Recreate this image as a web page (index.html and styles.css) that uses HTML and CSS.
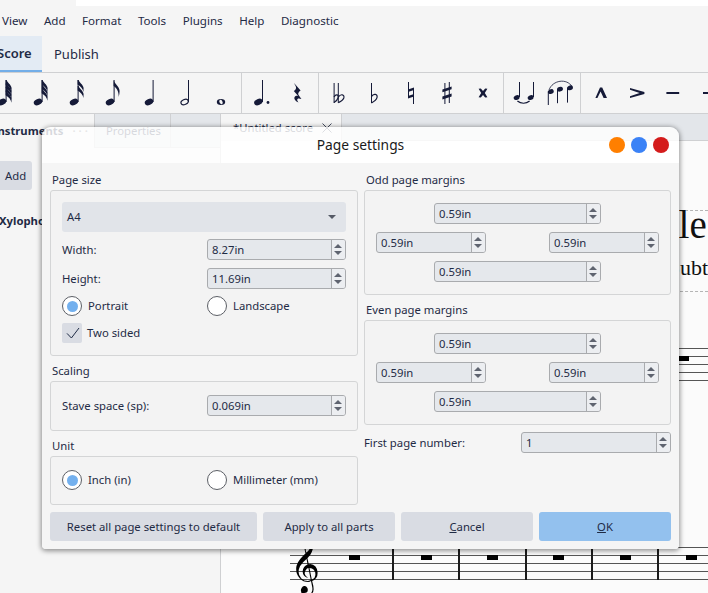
FILE: index.html
```html
<!DOCTYPE html>
<html lang="en">
<head>
<meta charset="utf-8">
<title>Page settings</title>
<link rel="stylesheet" href="styles.css">
</head>
<body>
<svg class="defs" aria-hidden="true">
  <defs>
    <ellipse id="head" cx="15" cy="29" rx="4.4" ry="3" transform="rotate(-22 15 29)"/>
    <path id="flag" d="M18.6 7 C19.6 11 24.4 13 24.6 18 C24.7 20 24.2 22 23.6 24 C24 20 22.6 15.6 18.6 13 Z"/>
    <path id="flagsm" d="M18.6 7 L19.6 7 C20.2 9.5 24.2 11.5 24.6 15 L24.4 19 C24 15.6 21.6 13 18.6 11.4 Z"/>
  </defs>
</svg>
<div class="app">
  <div class="topstrip"><div class="topstrip-left"></div></div>
  <nav class="menubar">
    <span>View</span><span>Add</span><span>Format</span><span>Tools</span><span>Plugins</span><span>Help</span><span>Diagnostic</span>
  </nav>
  <div class="modebar">
    <div class="mode mode-active"><span class="mode-clip">Score</span></div>
    <div class="mode">Publish</div>
  </div>
  <div class="toolbar">
    <button class="tool"><svg viewBox="0 0 36 40"><use href="#head"/><rect x="18.6" y="7" width="1" height="22"/><use href="#flagsm"/><use href="#flagsm" y="3.6"/><use href="#flagsm" y="7.2"/><use href="#flagsm" y="10.8"/></svg></button>
    <button class="tool"><svg viewBox="0 0 36 40"><use href="#head"/><rect x="18.6" y="7" width="1" height="22"/><use href="#flagsm"/><use href="#flagsm" y="4.4"/><use href="#flagsm" y="8.8"/></svg></button>
    <button class="tool"><svg viewBox="0 0 36 40"><use href="#head"/><rect x="18.6" y="7" width="1" height="22"/><use href="#flagsm"/><use href="#flagsm" y="6"/></svg></button>
    <button class="tool"><svg viewBox="0 0 36 40"><use href="#head"/><rect x="18.6" y="7" width="1" height="22"/><use href="#flag"/></svg></button>
    <button class="tool"><svg viewBox="0 0 36 40"><ellipse cx="18" cy="29" rx="4.4" ry="3" transform="rotate(-22 18 29)"/><rect x="21.6" y="7" width="1" height="22"/></svg></button>
    <button class="tool"><svg viewBox="0 0 36 40"><ellipse class="hollow" cx="17.6" cy="29" rx="3.8" ry="2.5" transform="rotate(-24 17.6 29)"/><rect x="21" y="7" width="1" height="22"/></svg></button>
    <button class="tool"><svg viewBox="0 0 36 40"><ellipse cx="18" cy="29" rx="4.2" ry="3"/><ellipse class="hole" cx="18" cy="29" rx="1.5" ry="2.3" transform="rotate(-30 18 29)"/></svg></button>
    <i class="divider"></i>
    <button class="tool"><svg viewBox="0 0 36 40"><ellipse cx="14.4" cy="29" rx="4.4" ry="3" transform="rotate(-22 14.4 29)"/><rect x="18" y="7" width="1" height="22"/><circle cx="24" cy="29.5" r="1.4"/></svg></button>
    <button class="tool"><svg viewBox="0 0 36 40"><path d="M14 10 L20.6 17.6 C18.6 19 17.8 20.6 18.4 21.8 L21.4 26 C18.8 25 17 25.4 17.2 27 C17.3 28 18 28.8 18.6 29.6 C15.6 28.4 13.6 26 14.6 24 C15.4 22.6 17.2 22.4 18.4 23.2 L13.8 18 C15.4 16.8 16.4 15.6 16 14.2 C15.8 13 14.8 11.6 14 10 Z"/></svg></button>
    <i class="divider"></i>
    <button class="tool"><svg viewBox="0 0 36 40"><rect x="12.6" y="10" width="1" height="20"/><rect x="16.8" y="10" width="1" height="20"/><path class="line" d="M13 24 C15 20.6 18 21.6 17 25 C16.4 27 14.6 28.6 13 29.6 M17.4 24 C19.6 20.6 23.8 21.2 22.8 25 C22.2 27 19.6 28.6 17.4 29.6" fill="none"/></svg></button>
    <button class="tool"><svg viewBox="0 0 36 40"><rect x="14" y="10" width="1" height="20"/><path class="line" d="M14.4 23.6 C16.6 20 21 21 20 24.6 C19.4 26.8 16.6 28.8 14.4 30" fill="none"/></svg></button>
    <button class="tool"><svg viewBox="0 0 36 40"><rect x="15" y="9" width="1" height="15.6"/><rect x="20" y="15" width="1" height="16"/><path d="M15 16.6 L21 14.6 L21 17 L15 19 Z M15 23 L21 21 L21 23.4 L15 25.4 Z"/></svg></button>
    <button class="tool"><svg viewBox="0 0 36 40"><rect x="15.4" y="10" width="1" height="21"/><rect x="19.8" y="9" width="1" height="21"/><path d="M13.4 16.4 L22.6 13.4 L22.6 16.2 L13.4 19.2 Z M13.4 23.6 L22.6 20.6 L22.6 23.4 L13.4 26.4 Z"/></svg></button>
    <button class="tool"><svg viewBox="0 0 36 40"><path d="M13.6 15.8 L15.8 15.4 L18 18 L20.2 15.4 L22.4 15.8 L19.8 20 L22.4 24.2 L20.2 24.6 L18 22 L15.8 24.6 L13.6 24.2 L16.2 20 Z"/></svg></button>
    <i class="divider"></i>
    <button class="tool"><svg viewBox="0 0 36 40"><ellipse cx="10.6" cy="24.6" rx="3" ry="2.3" transform="rotate(-22 10.6 24.6)"/><rect x="13" y="9" width="1" height="15"/><ellipse cx="24.6" cy="24.6" rx="3" ry="2.3" transform="rotate(-22 24.6 24.6)"/><rect x="27" y="9" width="1" height="15"/><path class="line" d="M11.4 28 C15 31 20 31 23.6 28" fill="none"/></svg></button>
    <button class="tool"><svg viewBox="0 0 36 40"><ellipse cx="8.8" cy="18.6" rx="3" ry="2.3" transform="rotate(-22 8.8 18.6)"/><rect x="5.8" y="18.6" width="1" height="13.4"/><ellipse cx="18" cy="16.2" rx="3" ry="2.3" transform="rotate(-22 18 16.2)"/><rect x="15" y="16.2" width="1" height="14"/><ellipse cx="28" cy="14.8" rx="3" ry="2.3" transform="rotate(-22 28 14.8)"/><rect x="25" y="14.8" width="1" height="14.8"/><path class="line thin" d="M7 17 C10.5 7 25 5 30 13.6" fill="none"/></svg></button>
    <i class="divider"></i>
    <button class="tool"><svg viewBox="0 0 36 40"><path d="M17 14.6 L19.2 14.6 L24 25 L20.6 25 L17.6 18.6 L14.4 25 L12.4 25 Z"/></svg></button>
    <button class="tool"><svg viewBox="0 0 36 40"><path d="M11 15 L25.4 19 L25.4 21 L11 25 L11 23.2 L20.6 20 L11 16.8 Z"/></svg></button>
    <button class="tool"><svg viewBox="0 0 36 40"><rect x="11.4" y="19" width="12.8" height="2"/></svg></button>
    <button class="tool"><svg viewBox="0 0 36 40"><rect x="12" y="19" width="12.8" height="2"/></svg></button>
  </div>
  <div class="workspace">
    <aside class="panel">
      <div class="panel-tabs">
        <div class="panel-tab panel-tab-active"><b class="panel-clip">Instruments</b><span class="dots">···</span></div>
        <div class="panel-tab panel-tab-props">Properties</div>
        <div class="panel-tab panel-tab-blank"></div>
      </div>
      <div class="add-btn">Add</div>
      <b class="instrument">Xylophone</b>
    </aside>
    <main class="main">
      <div class="doc-tabs">
        <div class="doc-tab"><span>*Untitled score</span>
          <svg class="doc-close" viewBox="0 0 10 10"><path d="M0.5 0.5 L9.5 9.5 M9.5 0.5 L0.5 9.5"/></svg>
        </div>
      </div>
      <div class="canvas">
        <div class="frame frame-top"></div>
        <div class="score-title">Title</div>
        <div class="score-sub">Subtitle</div>
        <div class="frame frame-bottom"></div>
        <div class="staff staff-upper">
          <div class="measure measure-upper"></div>
          <div class="measure"><i class="rest"></i></div><div class="measure"><i class="rest"></i></div><div class="measure"><i class="rest"></i></div><div class="measure"><i class="rest"></i></div><div class="measure"><i class="rest"></i></div>
        </div>
        <div class="staff staff-lower">
          <span class="clef">𝄞</span>
          <div class="measure measure-first"><i class="rest"></i></div>
          <div class="measure"><i class="rest"></i></div><div class="measure"><i class="rest"></i></div><div class="measure"><i class="rest"></i></div><div class="measure"><i class="rest"></i></div><div class="measure"><i class="rest"></i></div>
        </div>
      </div>
    </main>
  </div>
</div>

<section class="dialog">
  <header class="dialog-title">
    <span></span>
    <h1>Page settings</h1>
    <div class="win-btns"><i class="dot dot-orange"></i><i class="dot dot-blue"></i><i class="dot dot-red"></i></div>
  </header>
  <div class="dialog-body">
    <div class="columns">
      <div class="col">
        <div class="section">
          <div class="sec-label">Page size</div>
          <div class="box box-page">
            <div class="combo"><span>A4</span><i class="combo-arrow"></i></div>
            <div class="row row-first"><span>Width:</span><div class="spin"><span class="spin-val">8.27in</span><i class="spin-arrows"></i></div></div>
            <div class="row row-second"><span>Height:</span><div class="spin"><span class="spin-val">11.69in</span><i class="spin-arrows"></i></div></div>
            <div class="row row-radio">
              <label class="radio"><i class="radio-mark radio-on"></i>Portrait</label>
              <label class="radio"><i class="radio-mark"></i>Landscape</label>
            </div>
            <label class="check"><i class="check-mark"><svg viewBox="0 0 20 20"><path d="M5 10.4 L9.4 15 L17 5"/></svg></i>Two sided</label>
          </div>
        </div>
        <div class="section">
          <div class="sec-label">Scaling</div>
          <div class="box box-scale">
            <div class="row"><span>Stave space (sp):</span><div class="spin"><span class="spin-val">0.069in</span><i class="spin-arrows"></i></div></div>
          </div>
        </div>
        <div class="section">
          <div class="sec-label">Unit</div>
          <div class="box box-unit">
            <div class="row row-radio">
              <label class="radio"><i class="radio-mark radio-on"></i>Inch (in)</label>
              <label class="radio"><i class="radio-mark"></i>Millimeter (mm)</label>
            </div>
          </div>
        </div>
      </div>
      <div class="col">
        <div class="section">
          <div class="sec-label">Odd page margins</div>
          <div class="box box-margins">
            <div class="spin spin-wide"><span class="spin-val">0.59in</span><i class="spin-arrows"></i></div>
            <div class="margin-mid">
              <div class="spin spin-small"><span class="spin-val">0.59in</span><i class="spin-arrows"></i></div>
              <div class="spin spin-small"><span class="spin-val">0.59in</span><i class="spin-arrows"></i></div>
            </div>
            <div class="spin spin-wide"><span class="spin-val">0.59in</span><i class="spin-arrows"></i></div>
          </div>
        </div>
        <div class="section">
          <div class="sec-label">Even page margins</div>
          <div class="box box-margins">
            <div class="spin spin-wide"><span class="spin-val">0.59in</span><i class="spin-arrows"></i></div>
            <div class="margin-mid">
              <div class="spin spin-small"><span class="spin-val">0.59in</span><i class="spin-arrows"></i></div>
              <div class="spin spin-small"><span class="spin-val">0.59in</span><i class="spin-arrows"></i></div>
            </div>
            <div class="spin spin-wide"><span class="spin-val">0.59in</span><i class="spin-arrows"></i></div>
          </div>
        </div>
        <div class="first-page"><span>First page number:</span><div class="spin spin-first"><span class="spin-val">1</span><i class="spin-arrows"></i></div></div>
      </div>
    </div>
    <footer class="actions">
      <button class="btn btn-reset">Reset all page settings to default</button>
      <button class="btn">Apply to all parts</button>
      <button class="btn"><u>C</u>ancel</button>
      <button class="btn btn-ok"><u>O</u>K</button>
    </footer>
  </div>
</section>
</body>
</html>
```
FILE: styles.css
```css
* { box-sizing: border-box; }
html, body { margin: 0; padding: 0; }
body {
  width: 708px;
  height: 593px;
  overflow: hidden;
  position: relative;
  font: 11.3px/16px "Noto Sans", sans-serif;
  color: #1f2b45;
  background: #f5f5f5;
}
.defs { position: absolute; width: 0; height: 0; }
.app { display: flex; flex-direction: column; height: 593px; overflow: hidden; }

.topstrip { height: 6px; background: #fff; flex: none; }
.topstrip-left { width: 76px; height: 6px; background: #f5f5f5; }

.menubar { height: 30px; flex: none; display: flex; align-items: center; padding: 0 0 1px 2px; gap: 16.5px; background: #f5f5f5; font-size: 11.6px; }

.modebar { height: 36px; flex: none; display: flex; background: #f5f5f5; font-size: 13px; }
.mode { padding: 0 12px 1px; display: flex; align-items: center; height: 36px; }
.mode-active { width: 42px; padding: 0; background: #e3ebf4; border-bottom: 2px solid #73aee8; font-weight: 600; overflow: hidden; }
.mode-clip { margin-left: -3px; }

.toolbar { height: 42px; flex: none; display: flex; align-items: stretch; border-top: 1px solid #cfd0d2; border-bottom: 1px solid #cfd0d2; background: #f5f5f5; overflow: hidden; }
.tool { width: 36px; flex: none; height: 40px; padding: 0; border: 0; background: none; }
.tool:first-child { margin-left: -13px; }
.tool svg { display: block; width: 36px; height: 40px; fill: #151a38; }
.tool .hollow { fill: none; stroke: #151a38; stroke-width: 1.2; }
.tool .hole { fill: #f5f5f5; }
.tool .line { fill: none; stroke: #151a38; stroke-width: 1.2; }
.tool .thin { stroke-width: .8; }
.divider { width: 1px; flex: none; margin: 0 2px; background: #cfd0d2; }

.workspace { flex: 1; display: flex; min-height: 0; }
.panel { width: 221px; flex: none; background: #f5f5f5; border-right: 1px solid #cfd0d2; overflow: hidden; }
.panel-tabs { display: flex; height: 34px; }
.panel-tab { display: flex; align-items: center; height: 34px; flex: none; }
.panel-tab-active { width: 94px; gap: 9px; }
.panel-clip { margin-left: -7px; flex: none; }
.dots { letter-spacing: 3px; font-weight: 700; flex: none; color: #777; }
.panel-tab-props { width: 77px; padding-left: 11px; background: #e3e6ea; border-left: 1px solid #cfd0d2; border-right: 1px solid #cfd0d2; border-bottom: 1px solid #cfd0d2; }
.panel-tab-blank { width: 49px; background: #e3e6ea; border-bottom: 1px solid #cfd0d2; }
.add-btn { margin-top: 13px; height: 29px; width: 210px; margin-left: -178px; padding-left: 183px; line-height: 29px; background: #d9dce3; border-radius: 3px; }
.instrument { display: block; margin: 23px 0 0 -1px; white-space: nowrap; }

.main { flex: 1; display: flex; flex-direction: column; min-width: 0; }
.doc-tabs { height: 27px; flex: none; background: #e3e6ea; border-bottom: 1px solid #cfd0d2; display: flex; }
.doc-tab { width: 121px; height: 27px; padding-left: 12px; background: #f5f5f5; border-right: 1px solid #cfd0d2; display: flex; align-items: center; gap: 9px; }
.doc-close { width: 10px; height: 10px; flex: none; }
.doc-close path { stroke: #444c60; stroke-width: 1; fill: none; }

.canvas { flex: 1; position: relative; background: #fbfbfb; overflow: hidden; }
.frame { position: absolute; left: 60px; right: 0; height: 0; border-top: 1px dashed #b5b5b5; }
.frame-top { top: 69px; }
.frame-bottom { top: 150px; }
.score-title { position: absolute; left: 413.5px; top: 62px; font: 39px/44px "Liberation Serif", serif; color: #111; white-space: nowrap; }
.score-sub { position: absolute; left: 446.8px; top: 114px; font: 22px/26px "Liberation Serif", serif; color: #111; white-space: nowrap; }

.staff { position: absolute; height: 33px; display: flex; background: repeating-linear-gradient(to bottom, #555 0 1px, transparent 1px 8px); }
.staff-upper { left: 69px; top: 207px; width: 600px; }
.staff-lower { left: 69px; top: 406px; width: 600px; }
.measure { width: 66.33px; flex: none; border-right: 2px solid #1c1c1c; display: flex; justify-content: center; padding-top: 8px; }
.measure-upper { width: 295px; padding: 0; }
.measure-first { width: 104px; justify-content: flex-start; padding-left: 59px; }
.rest { display: block; width: 11px; height: 5px; background: #000; }
.clef { position: absolute; left: 0; top: -9px; font: 51px/52px "DejaVu Sans", sans-serif; color: #000; }

.dialog { position: absolute; left: 42px; top: 127px; width: 637px; height: 422px; border-radius: 9px 9px 4px 4px; box-shadow: 0 1px 5px 1px rgba(0,0,0,.42); display: flex; flex-direction: column; overflow: hidden; }
.dialog-title { height: 36px; flex: none; display: grid; grid-template-columns: 1fr auto 1fr; align-items: center; background: rgba(255,255,255,.82); padding: 0 10px; }
.dialog-title h1 { margin: 0; font-size: 13.8px; font-weight: 400; color: #1a1a1a; }
.win-btns { display: flex; gap: 6px; justify-content: flex-end; }
.dot { width: 16px; height: 16px; border-radius: 50%; display: block; }
.dot-orange { background: #ff7f00; }
.dot-blue { background: #3b82f6; }
.dot-red { background: #d41c1c; }

.dialog-body { flex: 1; background: #f5f5f5; padding: 9px 8px 8px; display: flex; flex-direction: column; }
.columns { display: grid; grid-template-columns: 308px 307px; column-gap: 6px; align-items: start; }
.col { display: flex; flex-direction: column; gap: 7px; }
.sec-label { height: 17px; margin-bottom: 1px; padding-left: 2px; line-height: 15px; }
.box { border: 1px solid #d4d5d6; border-radius: 3px; background: #f3f3f3; padding-left: 11px; padding-right: 11px; }
.box-page { height: 166px; padding-top: 11px; display: flex; flex-direction: column; }
.box-scale { height: 50px; padding-top: 13px; }
.box-unit { height: 49px; padding-top: 13px; }
.box-margins { height: 105px; padding-top: 12px; display: flex; flex-direction: column; align-items: center; gap: 8px; }
.margin-mid { align-self: stretch; display: flex; justify-content: space-between; }

.combo { height: 30px; flex: none; background: #e1e4e9; border-radius: 3px; display: flex; align-items: center; justify-content: space-between; padding: 0 10px 0 5px; }
.combo-arrow { width: 0; height: 0; border-left: 4px solid transparent; border-right: 4px solid transparent; border-top: 4px solid #555a66; }
.row { display: grid; grid-template-columns: 145px 139px; align-items: center; }
.row-first { margin-top: 7px; }
.row-second { margin-top: 8px; }
.row-radio { margin-top: 7px; }
.box-unit .row-radio { margin-top: 0; }

.spin { height: 21px; border: 1px solid #a9abae; border-radius: 3px; background: #e5e8ec; display: flex; overflow: hidden; }
.spin-val { flex: 1; padding-left: 4px; line-height: 20px; }
.spin-arrows { width: 14px; flex: none; position: relative; background: #eceef1; border-left: 1px solid #a9abae; }
.spin-arrows::before, .spin-arrows::after { content: ""; position: absolute; left: 2px; border-left: 4px solid transparent; border-right: 4px solid transparent; }
.spin-arrows::before { top: 4px; border-bottom: 4px solid #5f6470; }
.spin-arrows::after { bottom: 4px; border-top: 4px solid #5f6470; }
.spin-wide { width: 167px; }
.spin-small { width: 110px; }
.spin-first { width: 150px; }
.first-page { display: flex; justify-content: space-between; align-items: center; }

.radio { display: flex; align-items: center; gap: 6px; height: 20px; }
.radio-mark { width: 20px; height: 20px; border-radius: 50%; border: 1px solid #5c5f66; background: #fff; display: flex; align-items: center; justify-content: center; flex: none; }
.radio-on::before { content: ""; width: 11px; height: 11px; border-radius: 50%; background: #73b0ee; }
.check { display: flex; align-items: center; gap: 5px; height: 20px; margin-top: 7px; }
.check-mark { width: 20px; height: 20px; background: #d9dce3; border-radius: 2px; flex: none; }
.check-mark svg { display: block; width: 20px; height: 20px; fill: none; stroke: #1f2b45; stroke-width: 1; }

.actions { display: flex; gap: 6px; margin-top: 7px; }
.btn { width: 132px; height: 29px; flex: none; border: 0; border-radius: 3px; background: #d9dce3; font: inherit; color: inherit; padding: 0; }
.btn-reset { width: 207px; }
.btn-ok { background: #93c1ee; }
```
